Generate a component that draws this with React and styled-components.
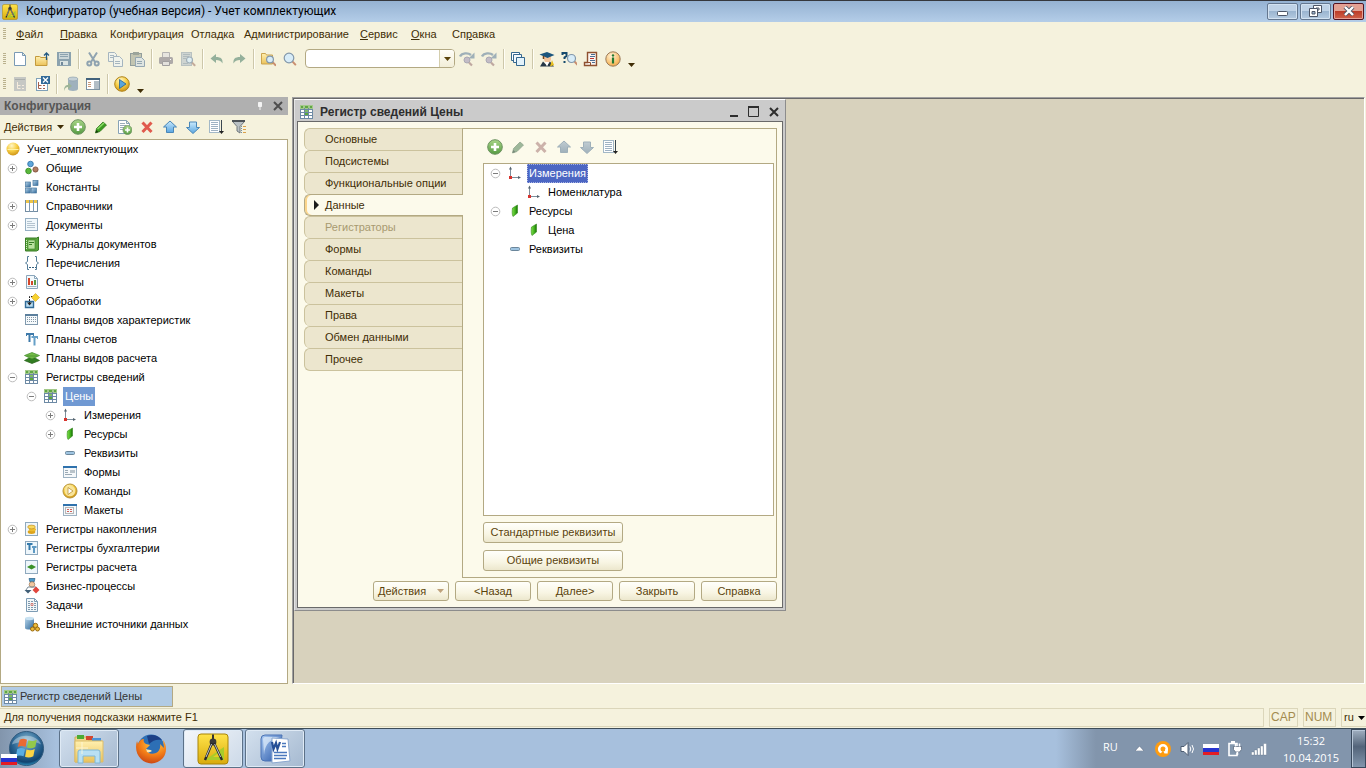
import React from 'react';
import styled, { createGlobalStyle, css } from 'styled-components';

const cream = '#f5f2dd';
const line = '#b3a983';
const ink = '#3f2d05';

const Global = createGlobalStyle`
  *, *::before, *::after { box-sizing: border-box; }
  body { margin: 0; font-family: "Liberation Sans", Arial, sans-serif; font-size: 11px; line-height: 13px; color: ${ink}; }
  button, input, select { font: inherit; color: inherit; }
  button { margin: 0; padding: 0; border: 0; background: none; }
  svg { display: block; flex: none; }
`;

/* ---------- icons ---------- */

const Svg = ({ size = 16, box = 16, children }) => (
  <svg width={size} height={size} viewBox={`0 0 ${box} ${box}`} aria-hidden="true">
    {children}
  </svg>
);

const HiddenDefs = styled.svg`position: absolute;`;

const Defs = () => (
  <HiddenDefs width="0" height="0" aria-hidden="true">
    <defs>
      <linearGradient id="gBlue" x1="0" y1="0" x2="0" y2="1"><stop offset="0" stopColor="#c9eafd" /><stop offset="1" stopColor="#5ba6e0" /></linearGradient>
      <linearGradient id="gGray" x1="0" y1="0" x2="0" y2="1"><stop offset="0" stopColor="#c0ccd2" /><stop offset="1" stopColor="#9fb0ba" /></linearGradient>
      <linearGradient id="gSteel" x1="0" y1="0" x2="1" y2="1"><stop offset="0" stopColor="#b7d5ea" /><stop offset="1" stopColor="#2d6698" /></linearGradient>
      <linearGradient id="gFolder" x1="0" y1="0" x2="0" y2="1"><stop offset="0" stopColor="#fff0b0" /><stop offset="1" stopColor="#ebc25a" /></linearGradient>
      <linearGradient id="gGreen" x1="0" y1="0" x2="0" y2="1"><stop offset="0" stopColor="#a9d688" /><stop offset="1" stopColor="#559a42" /></linearGradient>
      <linearGradient id="gLeaf" x1="0" y1="0" x2="1" y2="0"><stop offset="0" stopColor="#7fe04a" /><stop offset="0.6" stopColor="#3fae1c" /><stop offset="1" stopColor="#176b06" /></linearGradient>
      <radialGradient id="gGold" cx="0.4" cy="0.25" r="0.8"><stop offset="0" stopColor="#fff6c8" /><stop offset="0.5" stopColor="#f7cf45" /><stop offset="1" stopColor="#c98d12" /></radialGradient>
      <radialGradient id="gInfo" cx="0.4" cy="0.3" r="0.8"><stop offset="0" stopColor="#fff2d8" /><stop offset="0.7" stopColor="#f8bd66" /><stop offset="1" stopColor="#e89a35" /></radialGradient>
      <radialGradient id="gOrb" cx="0.5" cy="0.3" r="0.75"><stop offset="0" stopColor="#8fbdd6" /><stop offset="0.5" stopColor="#2f6a97" /><stop offset="0.8" stopColor="#124470" /><stop offset="1" stopColor="#35b6e6" /></radialGradient>
      <radialGradient id="gFox" cx="0.6" cy="0.2" r="0.9"><stop offset="0" stopColor="#ffd24a" /><stop offset="0.5" stopColor="#f47f18" /><stop offset="1" stopColor="#c23a12" /></radialGradient>
      <linearGradient id="gWord" x1="0" y1="0" x2="1" y2="1"><stop offset="0" stopColor="#a9c9f2" /><stop offset="1" stopColor="#2554a6" /></linearGradient>
      <linearGradient id="gApp" x1="0" y1="0" x2="0" y2="1"><stop offset="0" stopColor="#ffe34a" /><stop offset="1" stopColor="#d9ab0c" /></linearGradient>
    </defs>
  </HiddenDefs>
);

const Page = ({ stroke = '#7a9ab5', fill = '#fff' }) => <path d="M2.5 1.5h8l3 3v10h-11z M10.5 1.5v3h3" fill={fill} stroke={stroke} />;

const Lens = ({ cx, cy, r = 3.5, tone = '#c98f70' }) => (
  <g>
    <path d={`M${cx + r * 0.7} ${cy + r * 0.7}l3 3.2`} stroke={tone} strokeWidth="2" strokeLinecap="round" />
    <circle cx={cx} cy={cy} r={r} fill="#d7ecf8" stroke="#8297aa" strokeWidth="1.2" />
  </g>
);

const RoundArrow = () => (
  <g>
    <path d="M1 5.5C3 1.8 9 1.500 12 4" fill="none" stroke="#9fb0b8" strokeWidth="2.4" />
    <path d="M15.5 1.5v6h-6z" fill="#9fb0b8" />
    <circle cx="8" cy="9" r="3" fill="#c3bcc6" stroke="#a9a9b4" />
    <path d="M10 11.500l3 3" stroke="#bfa8a0" strokeWidth="2.2" />
  </g>
);

const Plus = ({ cx = 8, cy = 8, r = 7.3 }) => (
  <g>
    <circle cx={cx} cy={cy} r={r} fill="url(#gGreen)" stroke="#6c9260" strokeWidth={r > 5 ? 1 : 0.8} />
    <path d={`M${cx - r * 0.55} ${cy}h${r * 1.1}M${cx} ${cy - r * 0.55}v${r * 1.1}`} stroke="#fff" strokeWidth={r > 5 ? 2.6 : 1.6} />
  </g>
);

const Register = () => (
  <g>
    <rect x="1.5" y="1.5" width="12" height="13" fill="#fff" stroke="#6d8aa5" />
    <rect x="1" y="1" width="13" height="4" fill="#a3c98a" />
    <path d="M2 2h2v2h-2zM6 2h3v2h-3zM11 2h2v2h-2z" fill="#5fa644" />
    <path d="M5.5 4v11M9.5 4v11M1 5.5h13M1 8.5h13M1 11.5h13" stroke="#6d8aa5" fill="none" />
    <rect x="6" y="6" width="3" height="2" fill="#7fbb63" /><rect x="6" y="9" width="3" height="2" fill="#5aa83c" />
  </g>
);

const ListPage = () => (
  <g>
    <rect x="1.5" y="1.5" width="10" height="12" fill="#fff" stroke="#a3b8c7" />
    <path d="M3 3.5h7M3 5.5h7M3 7.5h7M3 9.5h7M3 11.5h7" stroke="#9fb2c3" />
    <path d="M13.5 1v12" stroke="#3a4650" /><path d="M11 12h5l-2.5 3z" fill="#222" />
  </g>
);

const WinFrame = ({ children }) => (
  <g>
    <rect x="1.5" y="3.5" width="13" height="10" fill="#f5f8fa" stroke="#9db2c3" />
    <rect x="1" y="2" width="14" height="2" fill="#2f72ad" />
    {children}
  </g>
);

const Boxed = ({ children }) => (
  <g><rect x="1.5" y="1.5" width="12" height="13" fill="#eef6fb" stroke="#8fa9be" />{children}</g>
);

const Accounts = () => (
  <g fill="none" stroke="#3e7aaa"><path d="M2 3h8M5.5 3v8" strokeWidth="2" /><path d="M2.500 2v3M9.500 2v3" /><g stroke="#66a0c8"><path d="M7.500 6h6M10.500 6v8.5" strokeWidth="2" /><path d="M13.500 5v3" /></g></g>
);

const Flag = () => (
  <g>
    <rect x="0" y="3" width="16" height="4" fill="#fff" /><rect x="0" y="7" width="16" height="4" fill="#2734cf" /><rect x="0" y="11" width="16" height="3" fill="#e31d24" />
  </g>
);

const Compass = () => (
  <g>
    <rect x="1" y="1" width="30" height="30" rx="3" fill="url(#gApp)" stroke="#a88408" />
    <path d="M8 27h19V14z" fill="#a8cc2a" /><path d="M16 24h7v-5z" fill="#e7cc23" />
    <path d="M16 1.5v6" stroke="#333" strokeWidth="2" />
    <circle cx="16" cy="9" r="3.4" fill="#3a3a3a" />
    <path d="M15 10L8 27M17 10l8 17" stroke="#2a2a2a" strokeWidth="2.4" />
    <path d="M14.6 11L9 24M17.6 11l6 13" stroke="#cfd6da" strokeWidth="0.9" />
  </g>
);

const art = {
  newFile: <Page />,
  open: <g><path d="M1.5 5.5h4l1.5 1h6v8h-11.5z" fill="url(#gFolder)" stroke="#c39a3c" /><path d="M12.5 9V2.500M10 4.5l2.5-2.5 2.5 2.5" fill="none" stroke="#245a83" strokeWidth="1.3" /></g>,
  save: <g><rect x="1" y="1" width="14" height="14" fill="#8ba2ae" /><rect x="3" y="2" width="10" height="6" fill="#cbd6d8" /><path d="M4 3.5h8M4 5.5h8" stroke="#8ba2ae" /><rect x="4" y="10" width="8" height="4" fill="#dbe4e2" /><rect x="5" y="11" width="2" height="3" fill="#71899a" /></g>,
  cut: <g fill="none" stroke="#8fa3b0" strokeWidth="2"><path d="M4 1.5l6 9.5M12 1.5L6 11" /><circle cx="4.3" cy="12.5" r="2" /><circle cx="11.7" cy="12.5" r="2" /></g>,
  copy: <g fill="#f0f3ec" stroke="#a5b5bf"><path d="M1.5 1.5h6l2 2v7h-8zM3 4.5h4M3 6.5h4" /><path d="M6.5 5.5h6l3 3v7h-9zM8 10.5h5M8 12.5h5" /></g>,
  paste: <g><rect x="1.5" y="2.5" width="11" height="12" fill="#c3c5b1" stroke="#929e9c" /><rect x="4" y="1" width="6" height="3" fill="#9ca59b" /><path d="M6.5 6.5h6l3 3v6h-9zM8 10.5h5M8 12.5h5" fill="#dfe5e1" stroke="#95a7b2" /></g>,
  print: <g><path d="M4.5 1.5h7V7h-7z" fill="#e7e5df" stroke="#b4b3b2" /><rect x="1" y="6" width="14" height="7" rx="1.5" fill="#aeaaa9" /><path d="M4.5 10.5h7v4h-7z" fill="#e3e1dc" stroke="#a19f9f" /><path d="M12 8.5h1" stroke="#fff" /></g>,
  preview: <g opacity="0.75"><rect x="1.5" y="1.5" width="10" height="13" fill="#c2cbce" stroke="#a5b2b8" /><path d="M3 3.5h7M3 5.5h6M3 7.5h3M3 12.5h5" stroke="#9aa9b2" /><Lens cx={9.5} cy={9} r={3} tone="#b49485" /></g>,
  undo: <path d="M7 3v3c5 0 7 2 6.500 6.5C12 9.500 10 9 7 9v3L1.500 7.500z" fill="#94b09b" />,
  redo: <path d="M9 3v3c-5 0-7 2-6.500 6.5C4 9.500 6 9 9 9v3l5.500-4.500z" fill="#94b09b" />,
  findFiles: <g><path d="M1.5 2.5h4l1 1.500h6v9h-11z" fill="url(#gFolder)" stroke="#cba44e" /><Lens cx={10} cy={8.5} r={3.4} /></g>,
  find: <Lens cx={7} cy={7} r={4.8} />,
  findNext: <RoundArrow />,
  findPrev: <RoundArrow />,
  windows: <g stroke="#35688f"><path d="M1.5 1.5h8v8h-8z" fill="#fff" /><path d="M3.5 3.5h8v8h-8z" fill="#f4f8fb" /><path d="M6.5 6.5h8v8h-8z" fill="#e3f2fa" /></g>,
  student: <g><path d="M5 5h7v4l-2 3H7L5 9z" fill="#f3c49a" /><path d="M0.5 3.5L8 1l7.500 3-7 3z" fill="#1b567d" /><path d="M4.5 5v3" stroke="#704319" strokeWidth="1.5" /><path d="M1 15.5l3-5 4 4 3-4 4 5z" fill="#263746" /><path d="M6 11l2 4.5 2-4.5z" fill="#fff" /><path d="M13 9l2 5-4 1.5z" fill="#e8c020" /></g>,
  helpFind: <g><path d="M1.500 4V2h4v3L3.500 6.5V8M3.500 10v2" fill="none" stroke="#164a6d" strokeWidth="2" /><Lens cx={10.5} cy={7.5} r={4} /></g>,
  syntax: <g><path d="M4.5 1.500h9v13h-12v-3h3z" fill="#fbf4ef" stroke="#8f5130" strokeWidth="1.4" /><path d="M4.500 11.500h3V14" fill="none" stroke="#8f5130" /><path d="M8 3.500h4M7 5.500h5M7 9.500h5M9 11.500h3" stroke="#4c6f94" /><path d="M7 7.500h4" stroke="#b33" /></g>,
  info: <g><circle cx="8" cy="8" r="7.2" fill="url(#gInfo)" stroke="#9b7b5a" /><circle cx="8" cy="4.4" r="1.2" fill="#237a32" /><path d="M8 6.5v6" stroke="#237a32" strokeWidth="2.2" /></g>,
  config: <g opacity="0.7"><rect x="2" y="1" width="12" height="14" fill="#b3b7ba" /><path d="M3 3.500h10" stroke="#8a9198" /><path d="M5.500 6v6.500h3M5.500 9.500h3M10 9.500h2M10 12.500h2" fill="none" stroke="#f5e9dc" /></g>,
  configClose: <g><rect x="2.5" y="2.500" width="11" height="12" fill="#fff" stroke="#7fa0b8" /><path d="M4.500 6v6.500h3M4.500 9.500h3M9 9.500h2M9 12.500h2" fill="none" stroke="#a4604c" /><rect x="7" y="0" width="9" height="8" fill="#326a98" /><path d="M9 1.5l5 5M14 1.5l-5 5" stroke="#fff" strokeWidth="1.3" /></g>,
  dbUpdate: <g><path d="M5 3v10c0 2.6 10 2.6 10 0V3" fill="#9fb1bd" /><ellipse cx="10" cy="3" rx="5" ry="2" fill="#c3cfd5" stroke="#8fa2ae" strokeWidth="0.7" /><path d="M1 15C1 10 3 9 5 9V6.5L9 10l-4 3.5V11c-2 0-3 1-4 4" fill="#9cb498" /></g>,
  panelWindow: <g><rect x="1.500" y="2.500" width="13" height="11" fill="#fff" stroke="#7d92a2" /><path d="M1 3h14" stroke="#42627c" strokeWidth="2" /><path d="M3 6.500h3M3 8.500h3M3 10.500h3" stroke="#c99877" /><rect x="9" y="5" width="5" height="8" fill="#b3bec6" /></g>,
  run: <g><circle cx="8" cy="8" r="7.3" fill="url(#gGold)" stroke="#af841c" /><path d="M5.500 3.5l6.500 4.5-6.500 4.5z" fill="#57a5dc" stroke="#24618f" strokeWidth="0.8" /></g>,
  add: <Plus />,
  edit: <g><path d="M2.5 14l1-4.5L10 3l3.5 3L7 12.5z" fill="#3c9c21" stroke="#286f15" strokeWidth="0.7" /><path d="M4.500 10L11 4" stroke="#8ddc67" strokeWidth="1.5" /><path d="M2.5 14l.7-3 2.3 2z" fill="#173d0b" /></g>,
  editOff: <g><path d="M2.5 14l1-4.5L10 3l3.5 3L7 12.5z" fill="#9db79a" stroke="#8a9f88" strokeWidth="0.7" /><path d="M2.5 14l.7-3 2.3 2z" fill="#78897a" /></g>,
  addCopy: <g><Page stroke="#87a2b6" /><path d="M4 4.500h5M4 6.500h6M4 8.500h4M4 10.500h3" stroke="#9aacba" /><Plus cx={11.5} cy={11} r={4.5} /></g>,
  remove: <path d="M3.5 3.5l9 9.5M12.5 3.5l-9 9.5" stroke="#e05a4d" strokeWidth="3" />,
  removeOff: <path d="M3.5 3.5l9 9.5M12.5 3.5l-9 9.5" stroke="#ccb2aa" strokeWidth="3" />,
  up: <path d="M8 2l6.500 6h-3v5.5h-7V8h-3z" fill="url(#gBlue)" stroke="#4a87b8" />,
  down: <path d="M8 14.5L1.500 8.500h3V3h7v5.500h3z" fill="url(#gBlue)" stroke="#4a87b8" />,
  upOff: <path d="M8 2l6.500 6h-3v5.5h-7V8h-3z" fill="url(#gGray)" stroke="#9fb0ba" />,
  downOff: <path d="M8 14.5L1.500 8.500h3V3h7v5.500h3z" fill="url(#gGray)" stroke="#9fb0ba" />,
  sort: <ListPage />,
  filter: <g><path d="M1.5 2.5h12l-4.5 5v6.5l-3-2V7.5z" fill="#b9c0c4" stroke="#70787d" /><path d="M1 2h13" stroke="#4c5257" strokeWidth="2" /><path d="M12 7.500h3M12 10.500h3M12 13.500h3" stroke="#dba14a" /><path d="M10.5 7v7" stroke="#7790a3" strokeDasharray="1 1" /></g>,
  root: <g><circle cx="8" cy="8" r="6.5" fill="url(#gGold)" /><path d="M2.5 8.500h11" stroke="#fff2a8" /></g>,
  common: <g strokeWidth="0.8"><circle cx="6.5" cy="4" r="2.800" fill="#5ea6db" stroke="#2b6fa5" /><circle cx="4.5" cy="11" r="2.800" fill="#59b83b" stroke="#2f861a" /><circle cx="11.500" cy="9.500" r="2.600" fill="#b07c62" stroke="#7b4c36" /></g>,
  constants: <g fill="url(#gSteel)" stroke="#4a7aa0" strokeWidth="0.7"><rect x="1.5" y="3" width="5" height="5" /><rect x="9" y="1.5" width="5" height="5" /><rect x="1.5" y="9" width="5" height="5" /><rect x="7.500" y="9" width="5" height="5" /></g>,
  catalogs: <g><rect x="1.5" y="2.5" width="12" height="11" fill="#fff" stroke="#748ea4" /><rect x="2" y="2" width="11" height="3" fill="#edc548" /><path d="M5.500 2v12M9.500 2v12" stroke="#7f99af" /></g>,
  documents: <g><rect x="1.5" y="1.5" width="12" height="12" fill="#f1f8fc" stroke="#96afc3" /><path d="M3 4.500h5M3 6.500h8M3 8.500h8M3 10.500h8" stroke="#b4c4d0" /></g>,
  journals: <g><path d="M1.5 2h11l2-1v13l-2 1h-11z" fill="#5ba53d" stroke="#387d27" /><rect x="4" y="4" width="7" height="9" fill="#b8e19e" stroke="#387d27" strokeWidth="0.6" /><path d="M5 6.500h5M5 8.500h3" stroke="#387d27" /><path d="M2.5 4v9" stroke="#d4efc5" strokeDasharray="1 1" /></g>,
  enums: <g fill="none" stroke="#547d99"><path d="M5 1.500H3.500v5L1.500 8l2 1.5v5H5M11 1.500h1.500v5l2 1.500-2 1.5v5H11" /><path d="M5 12.500h7" strokeDasharray="2 1" stroke="#35617f" /></g>,
  reports: <g><Page stroke="#8aa6bc" fill="#f3f9fc" /><path d="M5 4v7" stroke="#d4472b" strokeWidth="2" /><path d="M8 7v4" stroke="#d4472b" strokeWidth="2" /><path d="M11 6v5" stroke="#5b9a43" strokeWidth="2" /><path d="M3.500 12.500h9" stroke="#a3b3c0" /></g>,
  processing: <g><path d="M1.5 8.500h8v6h-8z" fill="#b9dcf2" stroke="#316b98" strokeWidth="1.4" /><path d="M5.500 11V3.500H9" fill="none" stroke="#222" strokeDasharray="2 1" /><path d="M3 9.500h5l-2.500 3z" fill="#222" /><path d="M11.500 0.500l4 4-4 4-4-4z" fill="#f7d22e" stroke="#d9aa30" strokeWidth="0.7" /></g>,
  kinds: <g><rect x="1.5" y="2.5" width="12" height="10" fill="#f6fafc" stroke="#8099ae" /><path d="M1 3h13" stroke="#5b7f9d" strokeWidth="2" /><path d="M3.500 5v6M5.500 5v6M7.500 5v6M9.500 5v6M11.500 5v6" stroke="#8597a6" strokeDasharray="1 1" /></g>,
  accounts: <Accounts />,
  calcKinds: <g strokeWidth="0.7"><path d="M0.500 10.500L5 8h6l4.500 2.500L8 13.500z" fill="#317c22" stroke="#256017" /><path d="M0.500 5.500L8 2.500 15.500 5.500 8 9z" fill="#73bb48" stroke="#3e8929" /><path d="M3 6h10" stroke="#3f8a2c" /></g>,
  register: <Register />,
  axes: <g><path d="M3.500 12V3M3.500 12.500H12" stroke="#7d8e9b" /><path d="M2 4.500l1.500-3 1.500 3M11 11l3 1.500-3 1.500" fill="#54636e" /><rect x="2" y="11" width="3" height="3" fill="#d8332d" /></g>,
  resource: <path d="M5.500 5L10.500 2v8L6 13.500C5 12 5 8 5.500 5z" fill="url(#gLeaf)" stroke="#34881d" strokeWidth="0.6" />,
  attribute: <rect x="3.500" y="6.500" width="9" height="3" rx="1" fill="#9ec4e1" stroke="#6b869b" />,
  forms: <WinFrame><path d="M3 6.500h3M3 8.500h3M3 10.500h7" stroke="#9aa9b5" /><rect x="8" y="6" width="5" height="3" fill="#b9c3ca" /></WinFrame>,
  commands: <g><circle cx="8" cy="8" r="7" fill="url(#gGold)" stroke="#b79337" /><circle cx="8" cy="8" r="5.3" fill="#f8e49a" /><path d="M6 4.500l5 3.500-5 3.500z" fill="#fff" stroke="#bd9232" strokeWidth="0.8" /></g>,
  layouts: <WinFrame><rect x="3.500" y="5.500" width="8" height="6" fill="none" stroke="#777" strokeDasharray="1 1" /><path d="M5 7.500h5M5 9.500h5" stroke="#d2605a" strokeDasharray="2 1" /></WinFrame>,
  accum: <Boxed><ellipse cx="7.500" cy="11" rx="3.8" ry="1.9" fill="#dda41d" /><ellipse cx="8.500" cy="8.500" rx="3.600" ry="1.8" fill="#edbd31" /><ellipse cx="7.500" cy="6" rx="3.8" ry="1.9" fill="#f7d85e" stroke="#ba8218" strokeWidth="0.6" /></Boxed>,
  booking: <Boxed><path d="M3 4h5.500M5.500 4v6" stroke="#357aac" strokeWidth="2" /><path d="M8 7h4.500M10 7v6" stroke="#5e9ac4" strokeWidth="2" /></Boxed>,
  calc: <Boxed><path d="M3 8l4.500-2.500L12 8l-4.500 2.500z" fill="#3b922a" /></Boxed>,
  business: <g><path d="M5 0.500h6L10 4H6z" fill="#4b99c8" stroke="#285e85" strokeWidth="0.7" /><circle cx="8" cy="6.500" r="2.800" fill="#f1c79f" stroke="#987454" strokeWidth="0.7" /><path d="M2 12l2-3h8l2 3" fill="none" stroke="#7d8d98" /><path d="M0.500 12h7L4 15.500z" fill="#405e76" /><path d="M12 8.500l3.500 3.500-3.500 3.500L8.500 12z" fill="#e1463d" /></g>,
  tasks: <g><Page stroke="#7d9cb5" fill="#f1f7fa" /><path d="M4 4.500h5M4 6.500h8M4 8.500h8M4 10.500h8M4 12.500h8" stroke="#8099ad" strokeDasharray="2 1" /><path d="M7 6.500h2v2h-2z" fill="none" stroke="#d07e78" /></g>,
  external: <g><path d="M1 2v10c0 2 9 2 9 0V2z" fill="url(#gSteel)" /><ellipse cx="5.500" cy="2.500" rx="4.500" ry="1.7" fill="#c9e2f2" /><g fill="#edbb38" stroke="#99690c"><circle cx="11.500" cy="9.500" r="2.2" /><circle cx="8.500" cy="13" r="2" /><circle cx="13.500" cy="13" r="2" /></g></g>,
};

const Icon = ({ name }) => <Svg>{art[name]}</Svg>;
const Caret = ({ color = ink }) => <svg width="7" height="4" viewBox="0 0 7 4" aria-hidden="true"><path d="M0 0h7L3.500 4z" fill={color} /></svg>;
const Expander = ({ open }) => (
  <svg width="11" height="11" viewBox="0 0 11 11" aria-hidden="true">
    <circle cx="5.500" cy="5.500" r="4.300" fill="#fff" stroke="#bcbcbc" />
    <path d={open ? 'M3 5.500h5' : 'M3 5.500h5M5.500 3v5'} stroke="#7c7c7c" />
  </svg>
);

/* ---------- application frame ---------- */

const Screen = styled.div`
  display: grid; grid-template-rows: 22px 24px 25px 26px minmax(0, 1fr) 23px 20px 40px;
  min-height: 100vh; min-width: 960px; background: ${cream};
`;
const TitleBar = styled.header`
  display: flex; align-items: center; gap: 8px; padding: 0 2px;
  border-top: 1px solid #35373d; background: linear-gradient(#95b2d2, #b4cde8);
  font-family: Roboto, "Open Sans", sans-serif; font-size: 12px; color: #000;
  h1 { flex: 1; margin: 0; font: inherit; }
`;
const CaptionButtons = styled.div`display: flex; gap: 2px; padding-bottom: 1px;`;
const CaptionButton = styled.button`
  display: grid; place-items: center; width: 31px; height: 17px;
  border: 1px solid ${p => (p.$close ? '#531421' : '#64778f')}; border-radius: 2px;
  box-shadow: inset 0 0 0 1px ${p => (p.$close ? '#e6a096' : '#d3e2f1')};
  background: ${p => (p.$close
    ? 'linear-gradient(#e2a193 45%, #bd3d29 50%, #d0624b)'
    : 'linear-gradient(#bfd2e6 45%, #9bb5d0 50%, #b5cbe1)')};
`;
const Grip = styled.span`
  width: 3px; height: 12px; flex: none;
  background: repeating-linear-gradient(#b9b18d 0 1px, transparent 1px 2px);
`;
const MenuBar = styled.nav`
  display: grid; grid-template-columns: 13px 44px 50px 81px 53px 116px 51px 41px 60px; align-items: center; padding-left: 3px;
  button { text-align: left; white-space: nowrap; }
`;
const Toolbar = styled.div`display: flex; align-items: center; padding-left: 3px;`;
const Tool = styled.button`display: grid; place-items: center; flex: none; width: ${p => p.$width || 22}px; height: 22px;`;
const Separator = styled.span`
  flex: none; width: 2px; height: 20px; margin: 0 2px 0 3px; border-left: 1px solid #cdc7aa; border-right: 1px solid #fffef6;
`;
const Overflow = styled.button`align-self: flex-end; padding: 0 4px 4px;`;
const ComboWrap = styled.div`
  display: grid; grid-template-columns: 1fr 15px; width: 150px; height: 19px; margin: 0 1px 0 4px;
  border: 1px solid ${line}; border-radius: 4px; background: #fff; overflow: hidden;
  input { min-width: 0; border: 0; padding: 0 4px; outline: 0; background: none; }
  button { display: grid; place-items: center; border-left: 1px solid #d4cead; background: linear-gradient(#fffef8, #f2eed8); }
`;
const Workspace = styled.main`display: grid; grid-template-columns: 288px minmax(0, 1fr); gap: 4px; min-height: 0; padding-right: 1px;`;

/* ---------- configuration dock ---------- */

const Dock = styled.aside`display: flex; flex-direction: column; min-height: 0; padding-bottom: 1px;`;
const DockHeader = styled.div`
  display: flex; align-items: center; height: 18px; padding: 0 1px 0 4px; background: #b0b0b0; color: #565656;
  h2 { flex: 1; margin: 0; font-size: 12px; line-height: 14px; }
  button { display: grid; place-items: center; width: 18px; height: 16px; }
`;
const DockTools = styled.div`display: flex; align-items: center; height: 24px; padding-left: 4px;`;
const ActionsMenu = styled.button`display: flex; align-items: center; gap: 5px; width: 62px; white-space: nowrap;`;
const TreeBox = styled.div`
  flex: 1; min-height: ${p => p.$min || 0}px; padding-left: 2px; overflow: hidden;
  border: 1px solid ${line}; background: #fff; color: #000;
`;
const TreeRow = styled.div`display: flex; align-items: center; height: 19px; padding-left: ${p => Math.max(0, p.$level - 1) * 19}px;`;
const Slot = styled.span`display: flex; align-items: flex-start; justify-content: center; flex: none; width: 19px; height: 17px;`;
const ExpandButton = styled.button`display: grid; place-items: center; width: 18px; height: 17px;`;
const Label = styled.span`
  margin-left: 3px; padding: 3px 2px; white-space: nowrap;
  ${p => p.$tone === 'soft' && css`background: #7099d3; color: #fff;`}
  ${p => p.$tone === 'strong' && css`background: #4c66c3; color: #fff; outline: 1px dotted #a9b4e4; outline-offset: -1px;`}
`;

const configTree = [
  [0, 'root', 'Учет_комплектующих'],
  [1, 'common', 'Общие', 'closed'],
  [1, 'constants', 'Константы'],
  [1, 'catalogs', 'Справочники', 'closed'],
  [1, 'documents', 'Документы', 'closed'],
  [1, 'journals', 'Журналы документов'],
  [1, 'enums', 'Перечисления'],
  [1, 'reports', 'Отчеты', 'closed'],
  [1, 'processing', 'Обработки', 'closed'],
  [1, 'kinds', 'Планы видов характеристик'],
  [1, 'accounts', 'Планы счетов'],
  [1, 'calcKinds', 'Планы видов расчета'],
  [1, 'register', 'Регистры сведений', 'open'],
  [2, 'register', 'Цены', 'open', 'soft'],
  [3, 'axes', 'Измерения', 'closed'],
  [3, 'resource', 'Ресурсы', 'closed'],
  [3, 'attribute', 'Реквизиты'],
  [3, 'forms', 'Формы'],
  [3, 'commands', 'Команды'],
  [3, 'layouts', 'Макеты'],
  [1, 'accum', 'Регистры накопления', 'closed'],
  [1, 'booking', 'Регистры бухгалтерии'],
  [1, 'calc', 'Регистры расчета'],
  [1, 'business', 'Бизнес-процессы'],
  [1, 'tasks', 'Задачи'],
  [1, 'external', 'Внешние источники данных'],
];
const dataTree = [
  [1, 'axes', 'Измерения', 'open', 'strong'],
  [2, 'axes', 'Номенклатура'],
  [1, 'resource', 'Ресурсы', 'open'],
  [2, 'resource', 'Цена'],
  [1, 'attribute', 'Реквизиты'],
];

const Tree = ({ label, items, min }) => (
  <TreeBox role="tree" aria-label={label} $min={min}>
    {items.map(([level, icon, text, state, tone], i) => (
      <TreeRow key={i} role="treeitem" aria-level={level + 1} aria-selected={!!tone} $level={level}>
        {level > 0 && <Slot>{state && <ExpandButton aria-label={`${text}: развернуть`}><Expander open={state === 'open'} /></ExpandButton>}</Slot>}
        <Slot><Icon name={icon} /></Slot>
        <Label $tone={tone}>{text}</Label>
      </TreeRow>
    ))}
  </TreeBox>
);

/* ---------- editor window ---------- */

const Desktop = styled.section`
  display: flex; align-items: flex-start; min-height: 0; overflow: hidden; margin-bottom: 1px;
  border: 1px solid; border-color: #a0a0a0 #fff #fff #a0a0a0;
  box-shadow: inset 1px 1px 0 #696969; padding: 1px 0 0 1px; background: #d8d2bd;
`;
const Editor = styled.article`
  width: 492px; padding: 0 2px 2px; border: solid 1px; border-color: #fff #8c8c8c #8c8c8c #e4e4e4; background: #cbcbcb;
`;
const EditorTitle = styled.header`
  display: flex; align-items: center; gap: 5px; height: 21px; padding: 2px 2px 0; color: #2e2e2e;
  h2 { flex: 1; margin: 0; font-size: 12px; line-height: 14px; }
  button { display: grid; place-items: center; width: 15px; height: 16px; }
`;
const EditorBody = styled.div`border: 1px solid #696969; padding: 6px 5px 6px 6px; background: #fcfaeb;`;
const Pages = styled.div`display: flex;`;
const TabList = styled.div`display: flex; flex-direction: column; width: 158px; flex: none;`;
const Tab = styled.button`
  display: flex; align-items: center; height: 22px; width: 158px; white-space: nowrap; text-align: left;
  border: solid #cbc29d; border-width: 1px 0 0 1px; border-radius: 6px 0 0 6px;
  background: #ece6ce; color: ${p => (p.disabled ? '#a89a70' : ink)};
  &:last-child { height: 23px; border-bottom-width: 1px; }
  ${p => p.$active && css`
    position: relative; z-index: 1; width: 159px; background: #fcfaeb; border-color: ${line};
    border-bottom-width: 1px; box-shadow: inset 2px 0 0 #fbd58b;
  `}
`;
const TabMark = styled.span`display: grid; place-items: center; width: 20px; padding-left: 3px;`;
const TabPanel = styled.div`flex: 1; display: flex; flex-direction: column; padding: 0 2px 6px 20px; border: 1px solid ${line};`;
const PanelTools = styled.div`display: flex; align-items: center; height: 34px; padding-top: 2px;`;
const PanelButtons = styled.div`display: flex; flex-direction: column; gap: 7px; width: 140px; padding-top: 6px;`;
const PushButton = styled.button`
  display: flex; align-items: center; justify-content: ${p => (p.$menu ? 'space-between' : 'center')};
  height: ${p => (p.$low ? 20 : 21)}px; flex: 1 0 auto; padding: 0 4px; white-space: nowrap; color: #5a430b;
  border: 1px solid ${line}; border-radius: 3px; background: linear-gradient(#fffffb, #f8f5e3 60%, #ece7cd);
`;
const Footer = styled.footer`
  display: grid; grid-template-columns: repeat(5, 76px); gap: 6px; justify-content: flex-end; padding-top: 3px;
`;

const tabs = ['Основные', 'Подсистемы', 'Функциональные опции', 'Данные', 'Регистраторы', 'Формы', 'Команды', 'Макеты', 'Права', 'Обмен данными', 'Прочее'];

/* ---------- bottom bars ---------- */

const WindowTabs = styled.div`display: flex; align-items: center; padding: 0 1px;`;
const WindowTab = styled.button`
  display: flex; align-items: center; gap: 1px; width: 172px; height: 21px; padding-left: 1px;
  border: 1px solid ${line}; background: #b1cbe5; color: #333;
`;
const StatusBar = styled.div`display: grid; grid-template-columns: 1fr 29px 33px 25px; gap: 5px; padding-bottom: 1px; background: ${cream};`;
const StatusCell = styled.div`
  display: flex; align-items: center; padding-left: ${p => (p.$flag ? 1 : 4)}px; border: 1px solid #dbd6ba; border-left-width: ${p => (p.$flag ? 1 : 0)}px;
  ${p => p.$flag && css`font-size: 12px; color: #a38b4e;`}
  white-space: nowrap;
`;
const LangButton = styled.button`display: flex; align-items: center; gap: 4px; padding-left: 2px; border: 1px solid #dbd6ba; border-right: 0;`;

const Taskbar = styled.footer`
  display: flex; align-items: stretch; border-top: 1px solid #3d4d58;
  background: linear-gradient(to left, #8295ac 270px, #a7c0dd 310px);
  font-family: "Open Sans", "Noto Sans", sans-serif; font-size: 11px; color: #fff;
`;
const Start = styled.button`
  position: relative; display: flex; align-items: center; padding-left: 8px; width: 56px; flex: none;
  background: linear-gradient(to right, #8295ac, #a7c0dd);
`;
const StartFlag = styled.span`position: absolute; left: 1px; bottom: 1px;`;
const TaskButtons = styled.div`display: flex; gap: 2px; flex: 1; padding-left: 3px;`;
const Task = styled.button`
  display: grid; place-items: center; width: 60px;
  ${p => p.$framed && css`border: 1px solid #5c7188; border-radius: 3px; box-shadow: inset 0 0 0 1px #dfeaf5; background: linear-gradient(135deg, #d3e0ee, #a5b9d0);`}
  ${p => p.$active && css`background: linear-gradient(135deg, #f4f7fb, #ccd9e8);`}
`;
const Tray = styled.div`display: flex; align-items: center;`;
const TrayText = styled.button`width: 24px; padding-bottom: 4px; text-align: left;`;
const TrayIcon = styled.button`display: grid; place-items: center; width: 24px; height: 32px;`;
const Clock = styled.time`width: 80px; text-align: center; line-height: 17px; padding-top: 1px;`;
const ShowDesktop = styled.button`align-self: stretch; width: 15px; border: 1px solid #39495d; box-shadow: inset 1px 1px 0 #b8c7d8; background: linear-gradient(#a1b0c1, #53647a 45%, #8296ad);`;

const menu = [['', 'Ф', 'айл'], ['', 'П', 'равка'], ['Конфигурация'], ['Отладка'], ['Администрирование'], ['', 'С', 'ервис'], ['', 'О', 'кна'], ['Сп', 'р', 'авка']];

const ToolGroup = ({ items, width }) => items.map(([name, label], i) => (
  name ? <Tool key={i} aria-label={label} title={label} $width={width}><Icon name={name} /></Tool> : <Separator key={i} />
));

const Cross = ({ color = '#2e2e2e' }) => <svg width="10" height="10" viewBox="0 0 10 10" aria-hidden="true"><path d="M1 1l8 8M9 1L1 9" stroke={color} strokeWidth="2" /></svg>;

export default function App() {
  return (
    <Screen>
      <Global />
      <TitleBar>
        <Defs />
        <Svg size={16} box={32}><Compass /></Svg>
        <h1>Конфигуратор (учебная версия) - Учет комплектующих</h1>
        <CaptionButtons>
          <CaptionButton aria-label="Свернуть"><svg width="12" height="10" viewBox="0 0 12 10"><rect x="0.500" y="5.500" width="10" height="4" rx="1" fill="#fff" stroke="#4d5667" /></svg></CaptionButton>
          <CaptionButton aria-label="Восстановить"><svg width="13" height="12" viewBox="0 0 13 12"><g fill="#fff" stroke="#4d5667"><path d="M4.500 0.500h8v7h-8z" /><path d="M7 3h3v2H7z" /><path d="M0.500 3.500h8v8h-8z" /><path d="M3 6.500h3v2.500H3z" fill="#9bb5d0" /></g></svg></CaptionButton>
          <CaptionButton $close aria-label="Закрыть окно"><svg width="12" height="10" viewBox="0 0 12 10"><path d="M2 1l8 8M10 1L2 9" stroke="#4d5667" strokeWidth="4" /><path d="M2 1l8 8M10 1L2 9" stroke="#fff" strokeWidth="2.4" /></svg></CaptionButton>
        </CaptionButtons>
      </TitleBar>

      <MenuBar aria-label="Главное меню">
        <Grip />
        {menu.map(([before, key, after]) => <button key={before + (key || '') + (after || '')}>{before}{key && <u>{key}</u>}{after}</button>)}
      </MenuBar>

      <Toolbar role="toolbar" aria-label="Стандартная">
        <Grip />
        <Toolbar>
          <ToolGroup items={[['newFile', 'Новый'], ['open', 'Открыть'], ['save', 'Сохранить'], [], ['cut', 'Вырезать'], ['copy', 'Копировать'], ['paste', 'Вставить'], [], ['print', 'Печать'], ['preview', 'Просмотр'], [], ['undo', 'Отменить'], ['redo', 'Вернуть'], [], ['findFiles', 'Найти в файлах'], ['find', 'Найти']]} />
          <ComboWrap><input aria-label="Строка поиска" /><button aria-label="История поиска"><Caret color="#5a430b" /></button></ComboWrap>
          <ToolGroup items={[['findNext', 'Найти далее'], ['findPrev', 'Найти ранее'], [], ['windows', 'Окна'], [], ['student', 'Обучение'], ['helpFind', 'Поиск в справке'], ['syntax', 'Синтакс-помощник'], ['info', 'О программе']]} />
        </Toolbar>
        <Overflow aria-label="Настройка панели"><Caret /></Overflow>
      </Toolbar>

      <Toolbar role="toolbar" aria-label="Конфигурация">
        <Grip />
        <Toolbar>
          <ToolGroup items={[['config', 'Открыть конфигурацию'], ['configClose', 'Закрыть конфигурацию'], [], ['dbUpdate', 'Обновить базу данных'], ['panelWindow', 'Окно конфигурации'], [], ['run', 'Начать отладку']]} />
        </Toolbar>
        <Overflow aria-label="Настройка панели конфигурации"><Caret /></Overflow>
      </Toolbar>

      <Workspace>
        <Dock>
          <DockHeader>
            <h2>Конфигурация</h2>
            <button aria-label="Закрепить"><svg width="6" height="8" viewBox="0 0 6 8"><path d="M1.500 0.500h3v4h-3zM3 5v3" fill="#f4f4f4" stroke="#f4f4f4" /></svg></button>
            <button aria-label="Закрыть панель"><Cross color="#4e4e4e" /></button>
          </DockHeader>
          <DockTools>
            <ActionsMenu>Действия <Caret /></ActionsMenu>
            <ToolGroup width={23} items={[['add', 'Добавить'], ['edit', 'Изменить'], ['addCopy', 'Скопировать'], ['remove', 'Удалить'], ['up', 'Вверх'], ['down', 'Вниз'], ['sort', 'Упорядочить'], ['filter', 'Отбор']]} />
          </DockTools>
          <Tree label="Конфигурация" items={configTree} />
        </Dock>

        <Desktop>
          <Editor>
            <EditorTitle>
              <Icon name="register" />
              <h2>Регистр сведений Цены</h2>
              <button aria-label="Свернуть окно"><svg width="8" height="10" viewBox="0 0 8 10"><path d="M0 9h8" stroke="#2e2e2e" strokeWidth="2" /></svg></button>
              <button aria-label="Развернуть окно"><svg width="11" height="11" viewBox="0 0 11 11"><path d="M0.500 1v9.500h10V1" fill="none" stroke="#2e2e2e" /><path d="M0 1h11" stroke="#2e2e2e" strokeWidth="2" /></svg></button>
              <button aria-label="Закрыть редактор"><Cross /></button>
            </EditorTitle>
            <EditorBody>
              <Pages>
                <TabList role="tablist" aria-label="Разделы">
                  {tabs.map(t => (
                    <Tab key={t} role="tab" aria-selected={t === 'Данные'} $active={t === 'Данные'} disabled={t === 'Регистраторы'}>
                      <TabMark>{t === 'Данные' && <svg width="5" height="10" viewBox="0 0 5 10"><path d="M0 0l5 5-5 5z" fill="#1c1c1c" /></svg>}</TabMark>
                      {t}
                    </Tab>
                  ))}
                </TabList>
                <TabPanel role="tabpanel" aria-label="Данные">
                  <PanelTools>
                    <ToolGroup width={23} items={[['add', 'Добавить'], ['editOff', 'Изменить'], ['removeOff', 'Удалить'], ['upOff', 'Вверх'], ['downOff', 'Вниз'], ['sort', 'Упорядочить']]} />
                  </PanelTools>
                  <Tree label="Данные регистра" items={dataTree} min={353} />
                  <PanelButtons>
                    <PushButton>Стандартные реквизиты</PushButton>
                    <PushButton>Общие реквизиты</PushButton>
                  </PanelButtons>
                </TabPanel>
              </Pages>
              <Footer>
                <PushButton $low $menu>Действия <Caret color="#bfa27c" /></PushButton>
                <PushButton $low>&lt;Назад</PushButton>
                <PushButton $low>Далее&gt;</PushButton>
                <PushButton $low>Закрыть</PushButton>
                <PushButton $low>Справка</PushButton>
              </Footer>
            </EditorBody>
          </Editor>
        </Desktop>
      </Workspace>

      <WindowTabs><WindowTab><Icon name="register" />Регистр сведений Цены</WindowTab></WindowTabs>

      <StatusBar>
        <StatusCell>Для получения подсказки нажмите F1</StatusCell>
        <StatusCell $flag>CAP</StatusCell>
        <StatusCell $flag>NUM</StatusCell>
        <LangButton>ru <Caret color="#000" /></LangButton>
      </StatusBar>

      <Taskbar>
        <Start aria-label="Пуск">
          <Svg size={37} box={38}>
            <circle cx="19" cy="19" r="17.500" fill="url(#gOrb)" stroke="#315a7d" />
            <path d="M4 15C7 3 30 3 34 15C25 10 13 11 4 15z" fill="#fff" opacity="0.350" />
            <path d="M12 10c3-1.500 5-1 7.500 0l-1.500 7.500c-2.500-1-4.500-1.500-8 0z" fill="#ea6a33" />
            <path d="M21 10.500c2.500 1 5 1.500 8.500-.5L28 17.500c-3 1.500-5.500 1.500-8.500.5z" fill="#93c94a" />
            <path d="M9.500 19.500c3.500-1.500 5.500-1 8 0L16 27c-2.500-1-5-1.500-8 .5z" fill="#5aaee4" />
            <path d="M19 20c2.500 1 5.500 1 8.500-.5L26 27c-3 1.500-6 1.500-8.500.5z" fill="#fcd445" />
          </Svg>
          <StartFlag><Svg><Flag /></Svg></StartFlag>
        </Start>
        <TaskButtons>
          <Task $framed aria-label="Проводник">
            <Svg size={34} box={34}>
              <path d="M3 5h11l2 3h13v22H3z" fill="#efd78b" stroke="#cfae5c" />
              <path d="M5 3h7v4H5z" fill="#4bab35" /><path d="M14 4h7v4h-7z" fill="#d3462f" /><path d="M20 6h9v4h-9z" fill="#4b93d8" />
              <path d="M3 9h28v21H3z" fill="url(#gFolder)" stroke="#dcbd6a" />
              <path d="M6 31V20q0-2 2-2h18q2 0 2 2v11h-5v-7H11v7z" fill="#b9e0f3" stroke="#7fb8d8" />
              <path d="M10 10v12M4 16h12" stroke="#fffbe0" opacity="0.800" />
            </Svg>
          </Task>
          <Task aria-label="Firefox">
            <Svg size={32} box={32}>
              <circle cx="16" cy="15" r="13.500" fill="#2d6fb5" /><path d="M12 3c5-2 11-1 15 4-5-1-9 0-13 4z" fill="#1c3f86" />
              <path d="M2 8l1 3c1-3 3-5 6-5-1 2 0 4 2 5l4 1-4 4c1 4 5 6 10 4 3-1 5-5 4-9l4 4-1-8c4 5 4 13 0 18-6 7-16 7-22 1C1 21 0 14 2 8z" fill="url(#gFox)" />
              <path d="M11 16c2 1 4 0 6 2-2 1-3 2-5 1z" fill="#ffe7b0" />
            </Svg>
          </Task>
          <Task $framed $active aria-label="1С:Предприятие"><Svg size={32} box={32}><Compass /></Svg></Task>
          <Task $framed aria-label="Word">
            <Svg size={32} box={32}>
              <path d="M2 6q0-4 4-4h17l-3 26H6q-4 0-4-4z" fill="url(#gWord)" stroke="#4a73b5" />
              <path d="M5 22C6 10 12 6 21 4H6q-2 0-2 2z" fill="#e4effb" opacity="0.700" />
              <path d="M13 5l16 1 2 22-18 2z" fill="#fff" stroke="#8aa7cf" />
              <path d="M13 9l1.500 7L17 10l1.500 6L21 9" fill="none" stroke="#264f97" strokeWidth="2.200" />
              <path d="M23 10.500h4M23 13.500h4M15 19.500h13M15 22.500h13M15 25.500h12" stroke="#4a78bd" strokeWidth="1.500" />
            </Svg>
          </Task>
        </TaskButtons>
        <Tray>
          <TrayText>RU</TrayText>
          <TrayIcon aria-label="Скрытые значки"><svg width="9" height="5" viewBox="0 0 9 5"><path d="M4.500 0L9 5H0z" fill="#fff" stroke="#50627a" strokeWidth="0.500" /></svg></TrayIcon>
          <TrayIcon aria-label="Антивирус"><Svg><circle cx="8" cy="8" r="8" fill="#ff9c0f" /><circle cx="8" cy="8" r="3.800" fill="none" stroke="#fff" strokeWidth="2.600" /><path d="M5 13.500l3-4 2 4z" fill="#ff9c0f" /><path d="M11.500 8v4.500" stroke="#fff" strokeWidth="2.400" /></Svg></TrayIcon>
          <TrayIcon aria-label="Громкость"><Svg><path d="M2 5.500h3L9 1.500v13l-4-4H2z" fill="#fff" stroke="#4d5d72" /><path d="M11 5.500q1.500 2.500 0 5M13 4q3 4 0 8" fill="none" stroke="#fff" /></Svg></TrayIcon>
          <TrayIcon aria-label="Русский язык"><Svg><Flag /></Svg></TrayIcon>
          <TrayIcon aria-label="Питание"><Svg><path d="M2 2.500h8v12H2z" fill="#8498ae" stroke="#fff" strokeWidth="1.600" /><path d="M4 1h4" stroke="#fff" strokeWidth="2" /><path d="M6.500 5.500h8v3l-2 2.500H8.500L6.500 8.500z" fill="#fff" stroke="#4d5d72" strokeWidth="0.700" /><path d="M8.500 2.500v3M12.500 2.500v3M10.500 11v3" fill="none" stroke="#fff" strokeWidth="1.500" /></Svg></TrayIcon>
          <TrayIcon aria-label="Сеть"><Svg><g fill="#fff" stroke="#55667b" strokeWidth="0.300"><path d="M0.500 11h2.500v3h-2.500zM3.500 9h2.500v5h-2.500zM6.500 7h2.500v7h-2.500zM9.500 5h2.500v9h-2.500zM12.500 2.500h3V14h-3z" /></g></Svg></TrayIcon>
          <Clock>15:32<br />10.04.2015</Clock>
          <ShowDesktop aria-label="Показать рабочий стол" />
        </Tray>
      </Taskbar>
    </Screen>
  );
}
